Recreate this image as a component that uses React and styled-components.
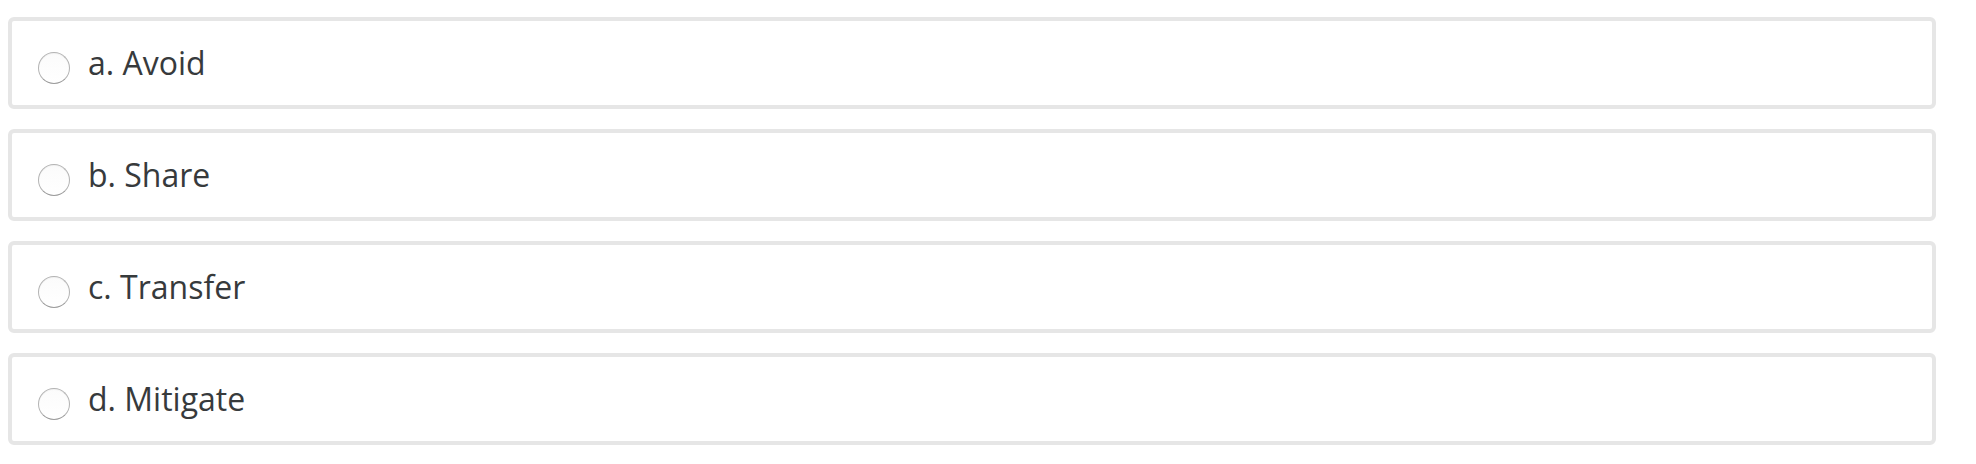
import React from "react";
import styled, { createGlobalStyle } from "styled-components";

const GlobalStyle = createGlobalStyle`
  html, body {
    margin: 0;
    padding: 0;
    background: #ffffff;
  }
  body {
    padding: 8px;
    font-family: "Open Sans", "Noto Sans", sans-serif;
    color: #333333;
  }
`;

const AnswerList = styled.div`
  display: flex;
  flex-direction: column;
  gap: 20px;
  margin: 9px 32px 0 0;
`;

const Option = styled.label`
  display: flex;
  align-items: center;
  box-sizing: border-box;
  height: 92px;
  padding: 0 25px 0 26px;
  border: 4px solid #e6e6e6;
  border-radius: 6px;
  background: #ffffff;
  cursor: pointer;
`;

const Radio = styled.span`
  flex: none;
  box-sizing: border-box;
  width: 32px;
  height: 32px;
  margin-top: 9px;
  margin-right: 18px;
  border-radius: 50%;
  border: 1.5px solid #b4b4b4;
  border-bottom-color: #9c9c9c;
  background: linear-gradient(#fbfbfb, #ffffff);
  box-shadow: inset 0 1px 1px rgba(0, 0, 0, 0.04);
`;

const OptionText = styled.span`
  font-size: 32px;
  line-height: 1.362;
  color: #373a3c;
`;

const answers = ["a. Avoid", "b. Share", "c. Transfer", "d. Mitigate"];

export default function App() {
  return (
    <>
      <GlobalStyle />
      <AnswerList>
        {answers.map((text) => (
          <Option key={text}>
            <Radio />
            <OptionText>{text}</OptionText>
          </Option>
        ))}
      </AnswerList>
    </>
  );
}
